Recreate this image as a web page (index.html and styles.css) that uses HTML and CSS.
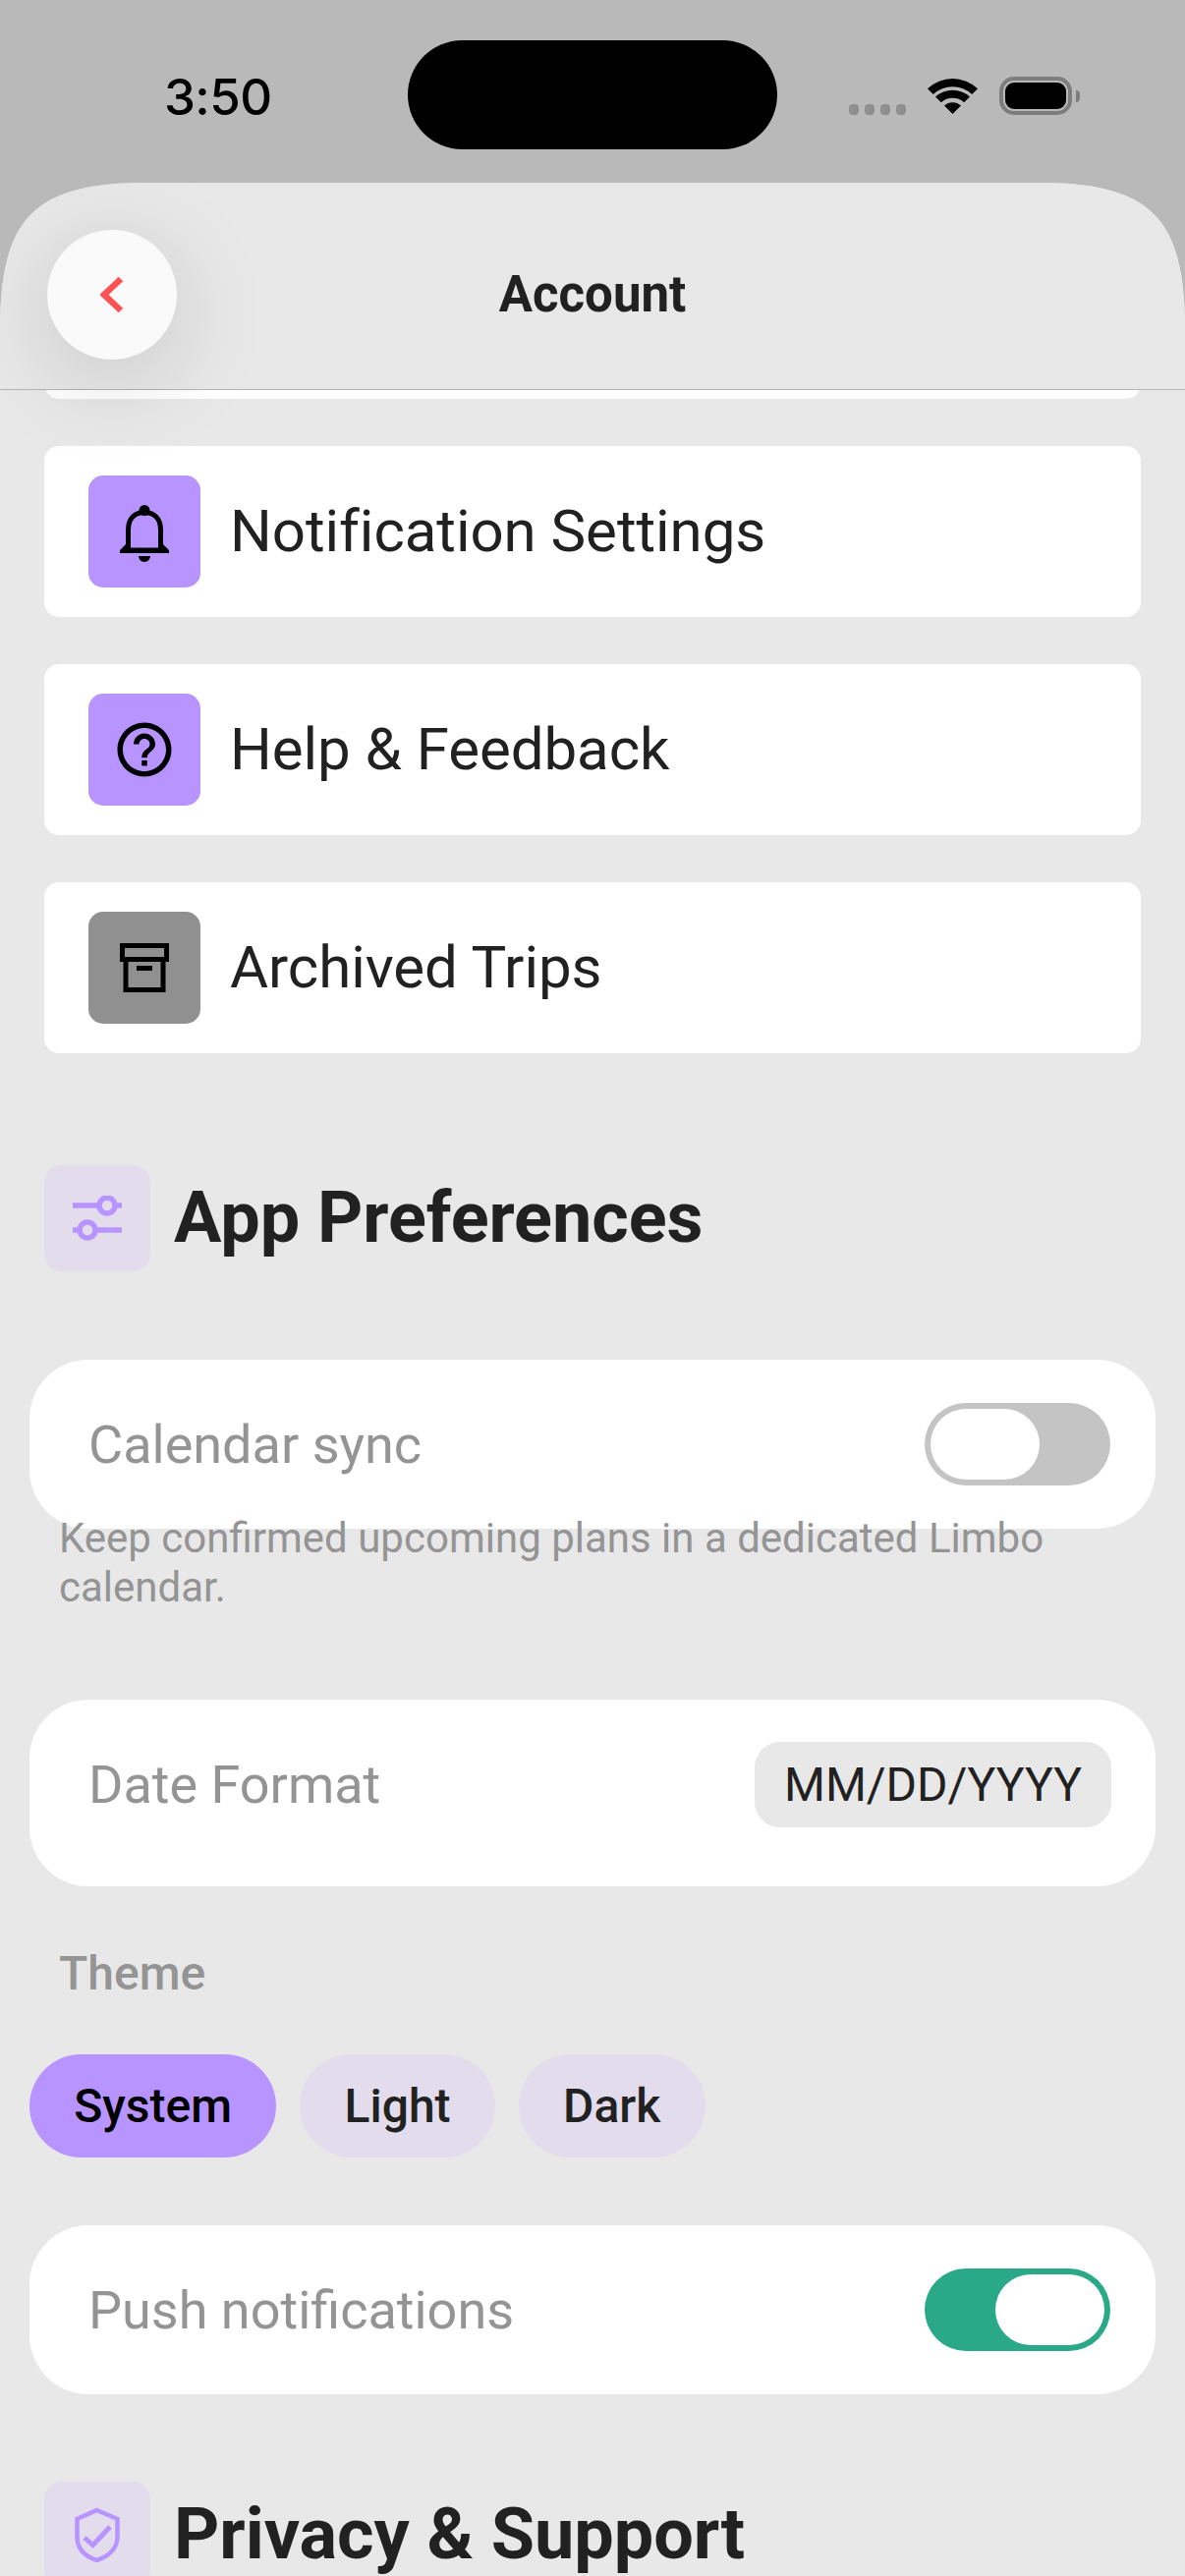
FILE: index.html
```html
<!DOCTYPE html>
<html lang="en">
<head>
  <meta charset="UTF-8">
  <title>Account</title>
  <link rel="stylesheet" href="styles.css">
</head>
<body>
<div class="status-bar">
  <div class="clock">3:50</div>
  <div class="island"></div>
  <div class="status-icons">
    <div class="signal"><i></i><i></i><i></i><i></i></div>
    <svg class="wifi" viewBox="0 0 51 37" aria-hidden="true">
      <path d="M0 11.2A37 37 0 0 1 51 11.2L45.2 17A29 29 0 0 0 5.8 17Z"/>
      <path d="M8 19.4A26 26 0 0 1 43 19.4L37.2 25.2A17.5 17.5 0 0 0 13.8 25.2Z"/>
      <path d="M17 28.6A12.5 12.5 0 0 1 34 28.6L25.5 37Z"/>
    </svg>
    <div class="battery"><div class="battery-level"></div></div>
    <div class="battery-cap"></div>
  </div>
</div>

<div class="sheet">
  <header class="top-bar">
    <button class="back-btn" aria-label="Back">
      <svg viewBox="0 0 24 38" width="24" height="38" aria-hidden="true"><path d="M21 3 4 19l17 16" fill="none" stroke="#ff5252" stroke-width="6.5"/></svg>
    </button>
    <h1 class="top-title">Account</h1>
  </header>

  <main class="content">
    <div class="menu-card menu-card-cut"></div>

    <div class="menu-card">
      <div class="menu-icon">
        <svg viewBox="0 -4 50 64" width="50" height="64" aria-hidden="true">
          <path d="M8.500 46V26C8.500 14 16 8.500 25 8.500S41.500 14 41.500 26V46" fill="none" stroke="#000" stroke-width="5"/>
          <path d="M0 47 6 41V44.500H44V41L50 47V50H0Z"/>
          <circle cx="25" cy="6.500" r="5.500"/>
          <path d="M19 53H31A6 6 0 0 1 19 53Z"/>
        </svg>
      </div>
      <span class="menu-label">Notification Settings</span>
    </div>
    <div class="menu-card">
      <div class="menu-icon">
        <svg viewBox="0 0 24 24" width="66" height="66" aria-hidden="true"><path d="M11 18h2v-2h-2v2zm1-16C6.48 2 2 6.48 2 12s4.48 10 10 10 10-4.48 10-10S17.52 2 12 2zm0 18c-4.41 0-8-3.59-8-8s3.59-8 8-8 8 3.59 8 8-3.59 8-8 8zm0-14c-2.21 0-4 1.79-4 4h2c0-1.1.9-2 2-2s2 .9 2 2c0 2-3 1.75-3 5h2c0-2.25 3-2.5 3-5 0-2.21-1.79-4-4-4z"/></svg>
      </div>
      <span class="menu-label">Help &amp; Feedback</span>
    </div>
    <div class="menu-card">
      <div class="menu-icon menu-icon-grey">
        <svg viewBox="0 0 50 50" width="50" height="50" fill="none" stroke="#000" stroke-width="5" aria-hidden="true">
          <path d="M2.500 2.500h45v14h-45z"/>
          <path d="M6 17v30.500h38V17"/>
          <path d="M17 25.500h16"/>
        </svg>
      </div>
      <span class="menu-label">Archived Trips</span>
    </div>

    <div class="section-head section-prefs">
      <div class="section-icon">
        <svg viewBox="0 0 50 46" width="50" height="46" fill="none" stroke="#b794ff" stroke-width="5.500" aria-hidden="true">
          <path d="M0 10h26M44 10h6"/>
          <circle cx="35" cy="10" r="8"/>
          <path d="M0 35h6M24 35h26"/>
          <circle cx="15" cy="35" r="8"/>
        </svg>
      </div>
      <h2 class="section-title">App Preferences</h2>
    </div>

    <div class="pref-card">
      <span class="pref-label">Calendar sync</span>
      <div class="toggle"><div class="knob"></div></div>
    </div>
    <p class="pref-help">Keep confirmed upcoming plans in a dedicated Limbo calendar.</p>

    <div class="pref-card pref-card-date">
      <span class="pref-label">Date Format</span>
      <div class="date-pill">MM/DD/YYYY</div>
    </div>

    <div class="theme-label">Theme</div>
    <div class="theme-row">
      <div class="theme-chip theme-chip-on">System</div>
      <div class="theme-chip">Light</div>
      <div class="theme-chip">Dark</div>
    </div>

    <div class="pref-card pref-card-push">
      <span class="pref-label">Push notifications</span>
      <div class="toggle toggle-on"><div class="knob"></div></div>
    </div>

    <div class="section-head section-privacy">
      <div class="section-icon">
        <svg viewBox="0 0 46 56" width="46" height="56" fill="none" stroke="#b794ff" stroke-width="4.500" aria-hidden="true">
          <path d="M22.500 3 43.500 12V30C43.500 42 34.500 50 22.500 54 10.500 50 2.500 42 2.500 30V12Z"/>
          <path d="M10 31l8.500 7.500L36 20" stroke-width="5"/>
        </svg>
      </div>
      <h2 class="section-title">Privacy &amp; Support</h2>
    </div>
  </main>
</div>
</body>
</html>
```

FILE: styles.css
```css
*{box-sizing:border-box;}
html,body{margin:0;padding:0;}
body{width:1206px;height:2622px;overflow:hidden;background:#b9b9b9;font-family:Roboto,"Liberation Sans",sans-serif;color:#212121;display:flex;flex-direction:column;}

/* status bar */
.status-bar{height:186px;flex:none;padding-top:41px;display:grid;grid-template-columns:1fr 376px 1fr;align-items:start;}
.clock{font-family:Inter,Roboto,sans-serif;font-size:51px;font-weight:500;letter-spacing:-.6px;line-height:115px;padding-left:167px;color:#000;}
.island{height:111px;border-radius:56px;background:#000;}
.status-icons{display:flex;align-items:flex-start;padding:37px 0 0 73px;}
.signal{display:flex;gap:6px;margin-top:28px;}
.signal i{display:block;width:10px;height:11px;border-radius:4px;background:#8f8f8f;}
.wifi{width:51px;height:37px;margin:1px 0 0 22px;}
.battery{width:74px;height:39px;margin-left:22px;padding:2px;border:4px solid #7d7d7d;border-radius:15px;}
.battery-level{height:100%;border-radius:9px;background:#000;}
.battery-cap{width:4px;height:12px;margin:14px 0 0 4px;border-radius:0 6px 6px 0;background:#7d7d7d;}

/* sheet, the top corners are a squircle so a plain radius won't do */
.sheet{flex:1;min-height:0;background:#e8e8e8;clip-path:path("M0 150C0 35 35 0 150 0H1056C1171 0 1206 35 1206 150V2436H0Z");display:flex;flex-direction:column;}
.top-bar{flex:none;position:relative;z-index:1;height:211px;padding:18px 48px 0;display:grid;grid-template-columns:132px 1fr 132px;align-items:center;background:#e8e8e8;border-bottom:1px solid #b5b5b5;}
.back-btn{width:132px;height:132px;padding:0;border:0;border-radius:50%;background:#fafafa;box-shadow:0 20px 100px rgba(0,0,0,.15);display:flex;align-items:center;justify-content:center;}
.top-title{margin:0;font-size:51px;font-weight:700;text-align:center;line-height:60px;}

.content{flex:1;min-height:0;overflow:hidden;padding:0 30px;}

/* menu rows */
.menu-card{height:174px;margin:0 15px 48px;padding:0 45px;display:flex;align-items:center;gap:30px;background:#fff;border-radius:15px;}
.menu-card-cut{margin-top:-165px;}
.menu-icon{width:114px;height:114px;flex:none;display:flex;align-items:center;justify-content:center;background:#b794ff;border-radius:15px;}
.menu-icon-grey{background:#909090;}
.menu-label{font-size:60px;line-height:70px;letter-spacing:-.05px;}

/* section headings */
.section-head{display:flex;align-items:center;gap:24px;margin-left:15px;}
.section-prefs{margin-top:114px;margin-bottom:90px;}
.section-privacy{margin-top:89px;}
.section-icon{width:108px;height:108px;flex:none;display:flex;align-items:center;justify-content:center;background:#e2dcec;border-radius:18px;}
.section-title{margin:0;font-size:72px;font-weight:700;line-height:84px;letter-spacing:-.05px;}

/* preference cards */
.pref-card{height:172px;padding:0 46px 0 60px;display:flex;align-items:center;justify-content:space-between;background:#fff;border-radius:60px;}
.pref-label{font-size:54px;line-height:64px;color:#949494;margin-top:2px;}
.pref-help{margin:-15px 0 89px;padding:0 60px 0 30px;font-size:42px;line-height:50px;color:#949494;}
.pref-card-date{height:190px;padding:43px 45px 60px 60px;}
.pref-card-date .pref-label{margin-top:0;}
.date-pill{height:87px;padding:0 30px;display:flex;align-items:center;font-size:48px;background:#e8e8e8;border-radius:26px;color:#212121;}

.toggle{width:189px;height:84px;padding:6px;display:flex;background:#c4c4c4;border-radius:42px;}
.toggle-on{justify-content:flex-end;background:#2aa988;}
.knob{width:111px;height:72px;background:#fff;border-radius:36px;}

/* theme picker */
.theme-label{margin:61px 0 54px 30px;font-size:48px;font-weight:500;line-height:56px;color:#949494;}
.theme-row{display:flex;gap:24px;margin-bottom:69px;}
.theme-chip{height:105px;padding:0 45.25px;display:flex;align-items:center;font-size:48px;font-weight:500;background:#e2dcec;border-radius:53px;}
.theme-chip-on{background:#b794ff;color:#000;}
```
